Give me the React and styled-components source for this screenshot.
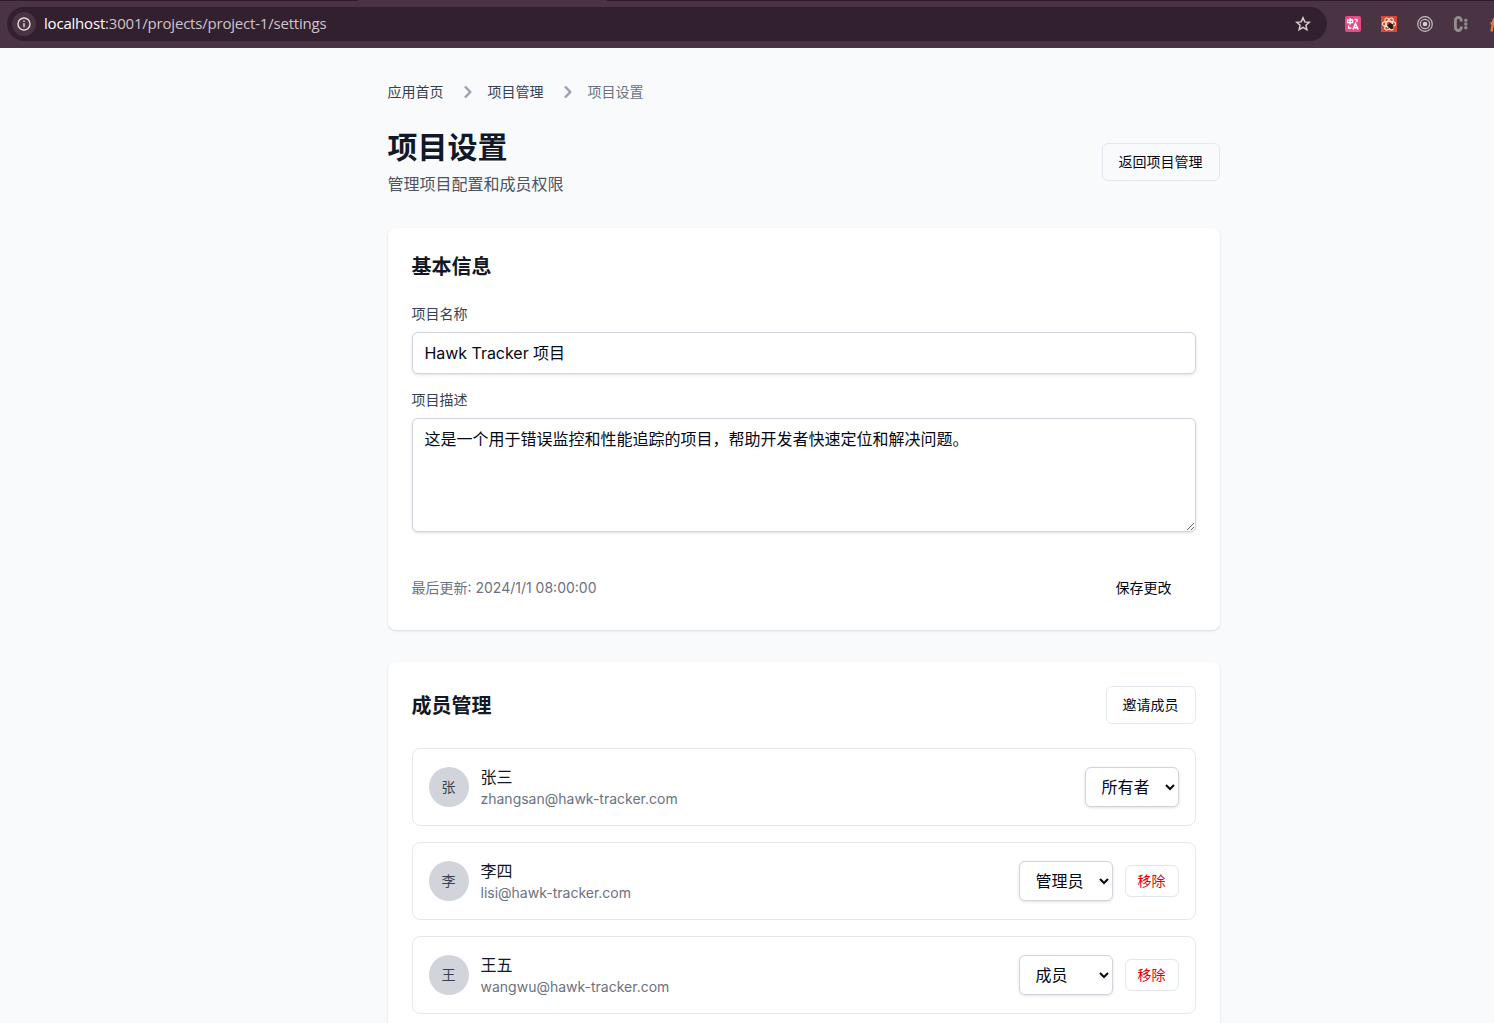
import React from 'react';
import styled, { createGlobalStyle, css } from 'styled-components';

const Global = createGlobalStyle`
  *, *::before, *::after { box-sizing: border-box; }
  body { margin: 0; overflow: hidden; background: #f9fafc; }
  h1, h2, p { margin: 0; }
  button, input, textarea, select { font-family: inherit; margin: 0; }
`;

const Window = styled.div`
  height: 1023px;
  overflow: hidden;
  background: #f9fafc;
  color: #020817;
  font-family: Inter, 'Noto Sans CJK SC', sans-serif;
  font-size: 16px;
  line-height: 24px;
`;

const BrowserBar = styled.header`
  display: flex;
  align-items: center;
  height: 48px;
  padding-left: 7px;
  background:
    linear-gradient(#2e1c2a, #2e1c2a) 0 0 / 358px 1px no-repeat,
    linear-gradient(#2e1c2a, #2e1c2a) 607px 0 / 887px 1px no-repeat,
    #4a3444;
  overflow: hidden;
`;

const AddressField = styled.div`
  display: flex;
  align-items: center;
  flex: none;
  width: 1320px;
  height: 34px;
  padding: 0 16px 0 5px;
  border-radius: 17px;
  background: #33202e;
`;

const SiteInfo = styled.span`
  display: grid;
  place-items: center;
  width: 24px;
  height: 24px;
  margin-right: 8px;
  border-radius: 50%;
  background: #4a3444;
`;

const Url = styled.span`
  flex: 1;
  padding-bottom: 2px;
  color: #cfc4cc;
  font-family: 'Open Sans', 'Noto Sans', sans-serif;
  font-size: 15px;
  letter-spacing: -0.2px;
`;

const Host = styled.span`
  color: #fff;
`;

const Extensions = styled.div`
  display: flex;
  flex: none;
  gap: 20px;
  margin-left: 18px;

  svg { display: block; flex: none; }
`;

const Page = styled.main`
  width: 1607px;
`;

const Container = styled.div`
  width: 896px;
  margin: 0 auto;
  padding: 34px 32px 0;
`;

const Breadcrumb = styled.nav`
  display: flex;
  align-items: center;
  gap: 12px;
  height: 20px;
  font-size: 14px;
  line-height: 20px;
`;

const Crumb = styled.span`
  color: ${(p) => (p.$current ? '#6b7280' : '#374151')};
`;

const PageHeader = styled.div`
  display: flex;
  align-items: center;
  justify-content: space-between;
  margin: 26px 0 32px;
`;

const Title = styled.h1`
  padding-top: 1px;
  font-size: 30px;
  line-height: 36px;
  font-weight: 700;
  color: #111827;
`;

const Subtitle = styled.p`
  margin-top: 7px;
  color: #4b5563;
`;

const Button = styled.button`
  height: ${(p) => (p.$small ? 32 : 38)}px;
  padding: 0 ${(p) => (p.$small ? 12 : 16)}px;
  border: 1px solid #e2e8f0;
  border-radius: 6px;
  background: transparent;
  color: ${(p) => (p.$danger ? '#e00010' : '#020817')};
  font-size: 14px;
  line-height: 20px;
  white-space: nowrap;
  ${(p) => p.$small && css`
    width: 54px;
    padding: 0;
  `}
  ${(p) => p.$plain && css`
    height: 36px;
    padding: 0 24px;
    border: 0;
  `}
`;

const Card = styled.section`
  margin-bottom: 32px;
  padding: 24px;
  border-radius: 8px;
  background: #fff;
  box-shadow: 0 1px 3px rgba(0, 0, 0, 0.1), 0 1px 2px -1px rgba(0, 0, 0, 0.1);
`;

const CardTitle = styled.h2`
  padding-top: 2px;
  font-size: 20px;
  line-height: 26px;
  font-weight: 600;
  color: #111827;
`;

const CardHeader = styled.div`
  display: flex;
  align-items: center;
  justify-content: space-between;
  margin-bottom: 24px;
`;

const Field = styled.label`
  display: flex;
  flex-direction: column;
  gap: 8px;
  margin-bottom: 16px;
`;

const FieldName = styled.span`
  font-size: 14px;
  line-height: 20px;
  color: #374151;
`;

const control = css`
  border: 1px solid #d1d5db;
  border-radius: 6px;
  background: #fff;
  color: #020817;
  font-size: 16px;
  line-height: 24px;
  box-shadow: 0 1px 3px rgba(0, 0, 0, 0.12);
`;

const Input = styled.input`
  ${control}
  width: 100%;
  height: 42px;
  padding: 7px 12px 9px;
  letter-spacing: -0.04px;
`;

const Textarea = styled.textarea`
  ${control}
  display: block;
  width: 100%;
  height: 114px;
  padding: 8px 12px;
  resize: vertical;
`;

const CardFooter = styled.div`
  display: flex;
  align-items: center;
  justify-content: space-between;
  margin-top: 38px;
  color: #6b7280;
  font-size: 14px;
  line-height: 20px;
`;

const MemberList = styled.div`
  display: flex;
  flex-direction: column;
  gap: 16px;
`;

const MemberRow = styled.div`
  display: flex;
  align-items: center;
  height: 78px;
  padding: 16px;
  border: 1px solid #e5e7eb;
  border-radius: 8px;
`;

const Avatar = styled.div`
  display: grid;
  place-items: center;
  width: 40px;
  height: 40px;
  margin-right: 12px;
  border-radius: 50%;
  background: #d1d5db;
  color: #374151;
  font-size: 14px;
`;

const MemberText = styled.div`
  flex: 1;
`;

const MemberName = styled.p`
  color: #111827;
`;

const MemberEmail = styled.p`
  color: #6b7280;
  font-size: 14px;
  line-height: 20px;
`;

const Actions = styled.div`
  display: flex;
  align-items: center;
  gap: 12px;
`;

const RoleSelect = styled.select`
  ${control}
  width: 94px;
  height: 40px;
  padding: 0 0 0 12px;
`;

const members = [
  { name: '张三', email: 'zhangsan@hawk-tracker.com', role: '所有者', owner: true },
  { name: '李四', email: 'lisi@hawk-tracker.com', role: '管理员' },
  { name: '王五', email: 'wangwu@hawk-tracker.com', role: '成员' },
];

const Chevron = () => (
  <svg width="20" height="20" viewBox="0 1.67 16.67 16.67" fill="#9ca3af">
    <path fillRule="evenodd" clipRule="evenodd" d="M7.293 14.707a1 1 0 010-1.414L10.586 10 7.293 6.707a1 1 0 011.414-1.414l4 4a1 1 0 010 1.414l-4 4a1 1 0 01-1.414 0z" />
  </svg>
);

const InfoIcon = () => (
  <svg width="14" height="14" viewBox="0 0 14 14" fill="none" stroke="#e4dce2" strokeWidth="1.4">
    <circle cx="7" cy="7" r="6" />
    <path d="M7 6.3v4M7 3.6v1.4" />
  </svg>
);

const StarIcon = () => (
  <svg width="16" height="16" viewBox="0 0 16 16" fill="none" stroke="#d8cdd5" strokeWidth="1.5">
    <path d="M8 1.8l1.8 4.1 4.5.4-3.4 3 1 4.4L8 11.4l-3.9 2.3 1-4.4-3.4-3 4.5-.4z" />
  </svg>
);

const TranslateIcon = () => (
  <svg width="16" height="16" viewBox="0 0 16 16">
    <rect width="16" height="16" rx="2" fill="#e94a86" />
    <g fill="none" stroke="#fff" strokeWidth="1.3">
      <path d="M2.6 4h5v2.6h-5zM5.1 2v6.6M9.5 3.5H12v2.6M3.6 9.6v2.6h2.8" />
      <path d="M8 13.5l2.5-6 2.5 6M8.8 11.7h3.4" strokeWidth="1.5" />
    </g>
  </svg>
);

const ReactBugIcon = () => (
  <svg width="16" height="16" viewBox="0 0 16 16">
    <rect width="16" height="16" fill="#d9482f" />
    <g fill="none" stroke="#fbe9e4" strokeWidth="1.1">
      <ellipse cx="8" cy="8" rx="6.6" ry="2.7" />
      <ellipse cx="8" cy="8" rx="6.6" ry="2.7" transform="rotate(60 8 8)" />
      <ellipse cx="8" cy="8" rx="6.6" ry="2.7" transform="rotate(120 8 8)" />
    </g>
    <ellipse cx="9.8" cy="10" rx="2.3" ry="3.2" fill="#2a1719" transform="rotate(-35 9.8 10)" />
    <path d="M6 9.5l6.5 3M7 12.5l5.5-4.5" stroke="#2a1719" strokeWidth="0.9" />
  </svg>
);

const TargetIcon = () => (
  <svg width="16" height="16" viewBox="0 0 16 16" fill="none" stroke="#c4bdc2" strokeWidth="1.2">
    <circle cx="8" cy="8" r="7.3" />
    <circle cx="8" cy="8" r="4.7" />
    <circle cx="8" cy="8" r="2.3" fill="#d4ced2" stroke="none" />
  </svg>
);

const LetterIcon = () => (
  <svg width="16" height="16" viewBox="0 0 16 16">
    <path d="M8.2 5.6V4.4a2.9 2.9 0 0 0-5.8 0v7.2a2.9 2.9 0 0 0 5.8 0v-1.2" fill="none" stroke="#918d8c" strokeWidth="2.9" />
    <g fill="#918d8c">
      <circle cx="12.8" cy="4.2" r="1.7" />
      <circle cx="12.8" cy="8" r="1.7" />
      <circle cx="12.8" cy="11.8" r="1.7" />
    </g>
  </svg>
);

const ClippedIcon = () => (
  <svg width="16" height="16" viewBox="0 0 16 16" fill="none" stroke="#f3703a" strokeWidth="2.4">
    <path d="M7 1.5C4.5 2 4.500 4 4 7L2.500 15.500M1.500 7.200h6" />
  </svg>
);

export default function App() {
  return (
    <Window>
      <Global />
      <BrowserBar>
        <AddressField>
          <SiteInfo><InfoIcon /></SiteInfo>
          <Url><Host>localhost</Host>:3001/projects/project-1/settings</Url>
          <StarIcon />
        </AddressField>
        <Extensions>
          <TranslateIcon />
          <ReactBugIcon />
          <TargetIcon />
          <LetterIcon />
          <ClippedIcon />
        </Extensions>
      </BrowserBar>
      <Page>
        <Container>
          <Breadcrumb>
            <Crumb>应用首页</Crumb>
            <Chevron />
            <Crumb>项目管理</Crumb>
            <Chevron />
            <Crumb $current>项目设置</Crumb>
          </Breadcrumb>
          <PageHeader>
            <div>
              <Title>项目设置</Title>
              <Subtitle>管理项目配置和成员权限</Subtitle>
            </div>
            <Button>返回项目管理</Button>
          </PageHeader>
          <Card>
            <CardHeader>
              <CardTitle>基本信息</CardTitle>
            </CardHeader>
            <Field>
              <FieldName>项目名称</FieldName>
              <Input defaultValue="Hawk Tracker 项目" />
            </Field>
            <Field>
              <FieldName>项目描述</FieldName>
              <Textarea defaultValue="这是一个用于错误监控和性能追踪的项目，帮助开发者快速定位和解决问题。" />
            </Field>
            <CardFooter>
              <span>最后更新: 2024/1/1 08:00:00</span>
              <Button $plain>保存更改</Button>
            </CardFooter>
          </Card>
          <Card>
            <CardHeader>
              <CardTitle>成员管理</CardTitle>
              <Button>邀请成员</Button>
            </CardHeader>
            <MemberList>
              {members.map((m) => (
                <MemberRow key={m.email}>
                  <Avatar>{m.name[0]}</Avatar>
                  <MemberText>
                    <MemberName>{m.name}</MemberName>
                    <MemberEmail>{m.email}</MemberEmail>
                  </MemberText>
                  <Actions>
                    <RoleSelect defaultValue={m.role}>
                      <option>所有者</option>
                      <option>管理员</option>
                      <option>成员</option>
                    </RoleSelect>
                    {!m.owner && <Button $small $danger>移除</Button>}
                  </Actions>
                </MemberRow>
              ))}
            </MemberList>
          </Card>
        </Container>
      </Page>
    </Window>
  );
}
